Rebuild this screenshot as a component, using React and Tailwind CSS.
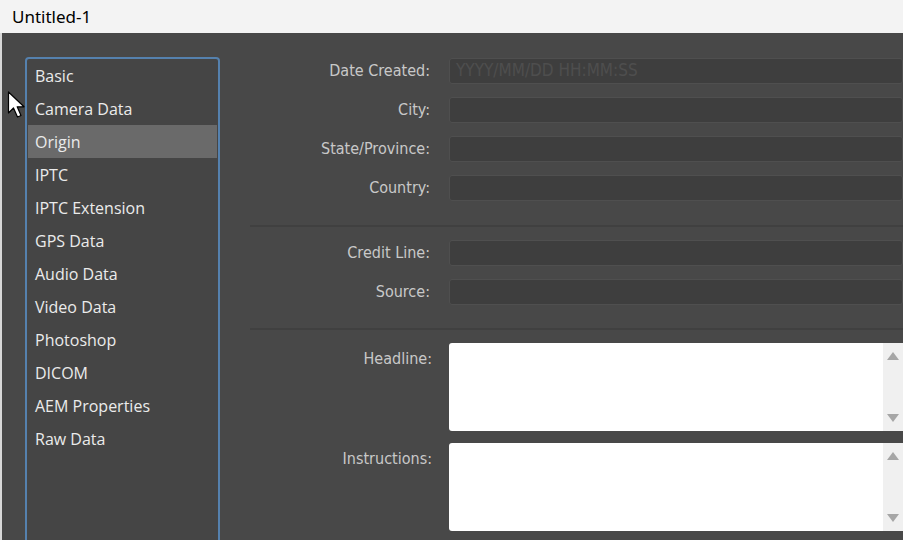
import React from 'react';

const sections = [
  'Basic', 'Camera Data', 'Origin', 'IPTC', 'IPTC Extension', 'GPS Data',
  'Audio Data', 'Video Data', 'Photoshop', 'DICOM', 'AEM Properties', 'Raw Data',
];

const labelFont = { fontFamily: '"Liberation Sans Narrow", "DejaVu Sans Condensed", "Noto Sans", sans-serif' };

function Field({ label, placeholder }) {
  return (
    <div className="flex items-center h-[26px]">
      <div className="w-[182px] shrink-0 text-right text-[16px] text-[#c8c8c8] pr-[2px]" style={labelFont}>{label}</div>
      <div className="ml-[17px] flex-1 h-full bg-[#3e3e3e] border border-[#4f4f4f] rounded-[3px] flex items-center px-[6px]">
        {placeholder && <span className="text-[17px] text-[#4e4e4e]" style={labelFont}>{placeholder}</span>}
      </div>
    </div>
  );
}

function Area({ label }) {
  return (
    <div className="flex h-[88px]">
      <div className="w-[182px] shrink-0 text-right text-[16px] text-[#c8c8c8] pt-[4px]" style={labelFont}>{label}</div>
      <div className="ml-[17px] flex-1 h-full bg-white rounded-[3px] flex justify-end">
        <div className="w-[20px] h-full bg-[#f0f0f0] flex flex-col items-center justify-between py-[9px]">
          <svg width="12" height="8" viewBox="0 0 12 8"><path d="M6 0 L12 8 L0 8 Z" fill="#a6a6a6" /></svg>
          <svg width="12" height="8" viewBox="0 0 12 8"><path d="M0 0 L12 0 L6 8 Z" fill="#a6a6a6" /></svg>
        </div>
      </div>
    </div>
  );
}

export default function App() {
  return (
    <div className="w-[903px] h-[540px] overflow-hidden flex flex-col bg-[#484848]" style={{ fontFamily: '"Open Sans", "Noto Sans", sans-serif' }}>
      <div className="h-[33px] shrink-0 bg-[#f3f3f3] flex items-center pl-[12px] text-[17px] text-black" style={{ fontFamily: '"Noto Sans", "Open Sans", sans-serif' }}>
        Untitled-1
      </div>
      <div className="relative flex-1 flex border-l-2 border-[#d8d8d8]">
        <div className="pl-[23px] pt-[24px] w-[248px] shrink-0">
          <div className="w-[195px] h-[500px] border-2 border-[#5581ae] rounded-t-[4px] bg-[#454545] px-[1px]">
            {sections.map((s) => (
              <div
                key={s}
                className={`h-[33px] flex items-center pl-[7px] text-[16px] text-[#ebebeb] ${s === 'Origin' ? 'bg-[#6a6a6a]' : ''}`}
              >
                {s}
              </div>
            ))}
          </div>
        </div>
        <div className="flex-1 pt-[25px] flex flex-col">
          <div className="flex flex-col gap-[13px]">
            <Field label="Date Created:" placeholder="YYYY/MM/DD HH:MM:SS" />
            <Field label="City:" />
            <Field label="State/Province:" />
            <Field label="Country:" />
          </div>
          <div className="h-[2px] bg-[#404040] mt-[24px] mb-[13px]" />
          <div className="flex flex-col gap-[13px]">
            <Field label="Credit Line:" />
            <Field label="Source:" />
          </div>
          <div className="h-[2px] bg-[#404040] mt-[23px] mb-[13px]" />
          <div className="flex flex-col gap-[12px]">
            <Area label="Headline:" />
            <Area label="Instructions:" />
          </div>
        </div>
        <svg className="absolute left-[5px] top-[58px]" width="19" height="28" viewBox="0 0 19 28">
          <path d="M1.5 1 L1.5 22 L6.5 17 L10.5 26 L14 24.5 L10.2 15.8 L17 15.8 Z" fill="white" stroke="black" strokeWidth="1.2" strokeLinejoin="round" />
        </svg>
      </div>
    </div>
  );
}
